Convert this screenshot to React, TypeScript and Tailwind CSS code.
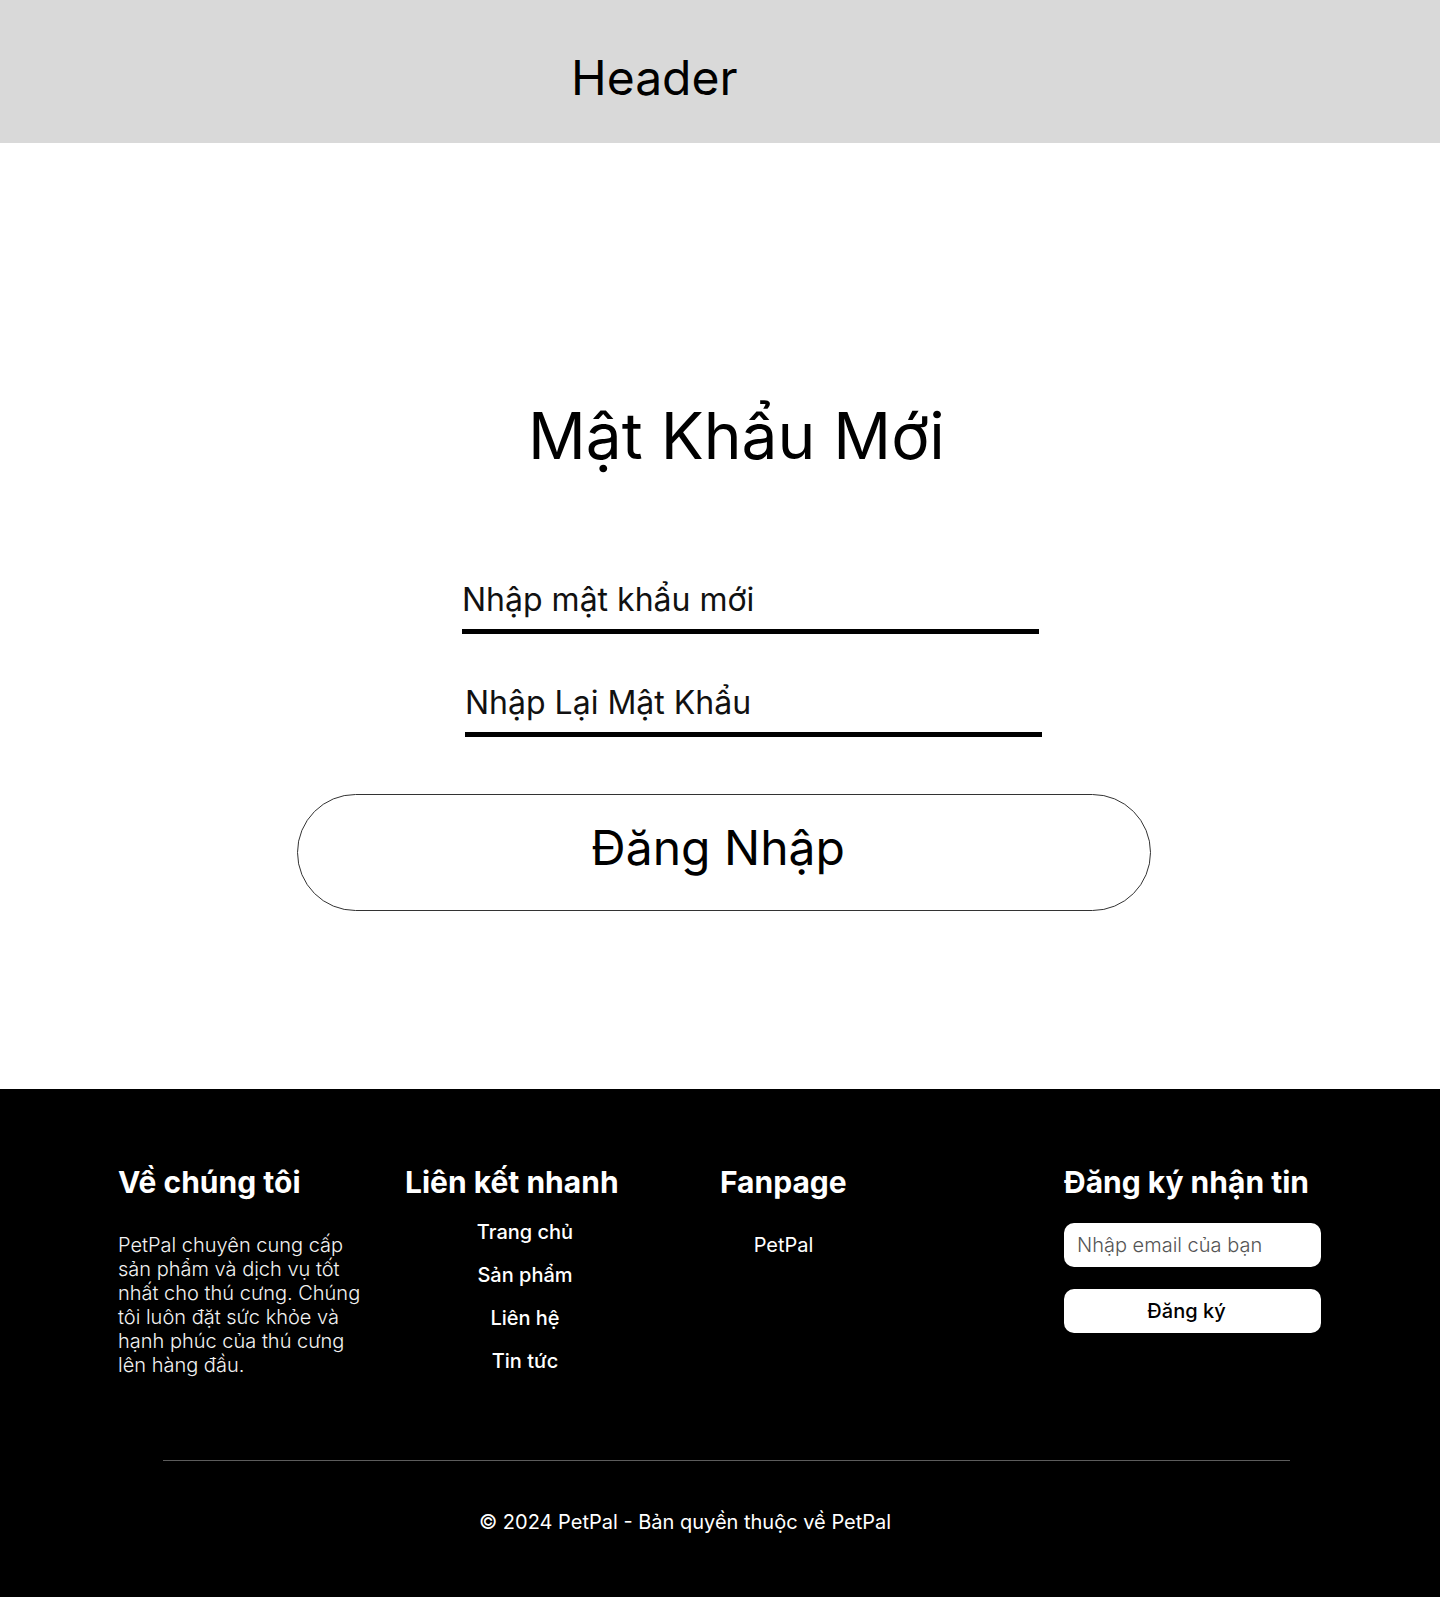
export default function App() {
  return (
    <div className="min-h-[1597px] w-[1440px] bg-white font-[Inter,sans-serif] text-black">
      <header className="h-[143px] bg-[#d9d9d9] pl-[571px] pt-[49px]">
        <h1 className="text-[48px] font-normal leading-[58px]">Header</h1>
      </header>

      <main className="flex h-[946px] flex-col items-start pt-[254px]">
        <h2 className="ml-[528px] text-[64px] font-normal leading-[77px]">Mật Khẩu Mới</h2>

        <label className="ml-[462px] mt-[106px] flex w-[577px] flex-col">
          <input
            type="password"
            placeholder="Nhập mật khẩu mới"
            className="h-[39px] bg-transparent text-[32px] leading-[39px] outline-none placeholder:text-[#111]"
          />
          <span className="mt-[10px] h-[5px] bg-black" />
        </label>

        <label className="ml-[465px] mt-[49px] flex w-[577px] flex-col">
          <input
            type="password"
            placeholder="Nhập Lại Mật Khẩu"
            className="h-[39px] bg-transparent text-[32px] leading-[39px] outline-none placeholder:text-[#111]"
          />
          <span className="mt-[10px] h-[5px] bg-black" />
        </label>

        <button
          type="button"
          className="ml-[297px] mt-[57px] h-[117px] w-[854px] rounded-full border border-[#333] pb-[10px] pr-3 text-[48px] leading-[58px]"
        >
          Đăng Nhập
        </button>
      </main>

      <footer className="h-[508px] bg-black pt-[75px] text-white">
        <div className="flex pl-[118px]">
          <div className="w-[287px]">
            <h3 className="text-[30px] font-bold leading-[36px]">Về chúng tôi</h3>
            <p className="mt-[33px] w-[270px] text-[20px] font-light leading-6 text-[#f2f2f2]">
              PetPal chuyên cung cấp
              <br />
              sản phẩm và dịch vụ tốt
              <br />
              nhất cho thú cưng. Chúng
              <br />
              tôi luôn đặt sức khỏe và
              <br />
              hạnh phúc của thú cưng
              <br />
              lên hàng đầu.
            </p>
          </div>

          <div className="w-[315px]">
            <h3 className="text-[30px] font-bold leading-[36px]">Liên kết nhanh</h3>
            <ul className="mt-[20px] flex w-[240px] flex-col items-center gap-[19px] text-[20px] font-medium leading-6">
              <li>Trang chủ</li>
              <li>Sản phẩm</li>
              <li>Liên hệ</li>
              <li>Tin tức</li>
            </ul>
          </div>

          <div className="w-[344px]">
            <h3 className="text-[30px] font-bold leading-[36px]">Fanpage</h3>
            <div className="mt-[33px] w-[127px] text-center text-[20px] leading-6">PetPal</div>
          </div>

          <div className="w-[257px]">
            <h3 className="text-[30px] font-bold leading-[36px]">Đăng ký nhận tin</h3>
            <input
              type="email"
              placeholder="Nhập email của bạn"
              className="mt-[23px] h-[44px] w-full rounded-[10px] bg-white px-[13px] text-[20px] font-light text-black outline-none placeholder:text-[#555]"
            />
            <button
              type="button"
              className="mt-[22px] h-[44px] w-full rounded-[10px] bg-white pr-3 text-[20px] font-medium text-black"
            >
              Đăng ký
            </button>
          </div>
        </div>

        <div className="ml-[163px] mt-[83px] h-px w-[1127px] bg-[#5c5c5c]" />

        <p className="mt-[49px] pr-[70px] text-center text-[20px] leading-6">
          © 2024 PetPal - Bản quyền thuộc về PetPal
        </p>
      </footer>
    </div>
  );
}
